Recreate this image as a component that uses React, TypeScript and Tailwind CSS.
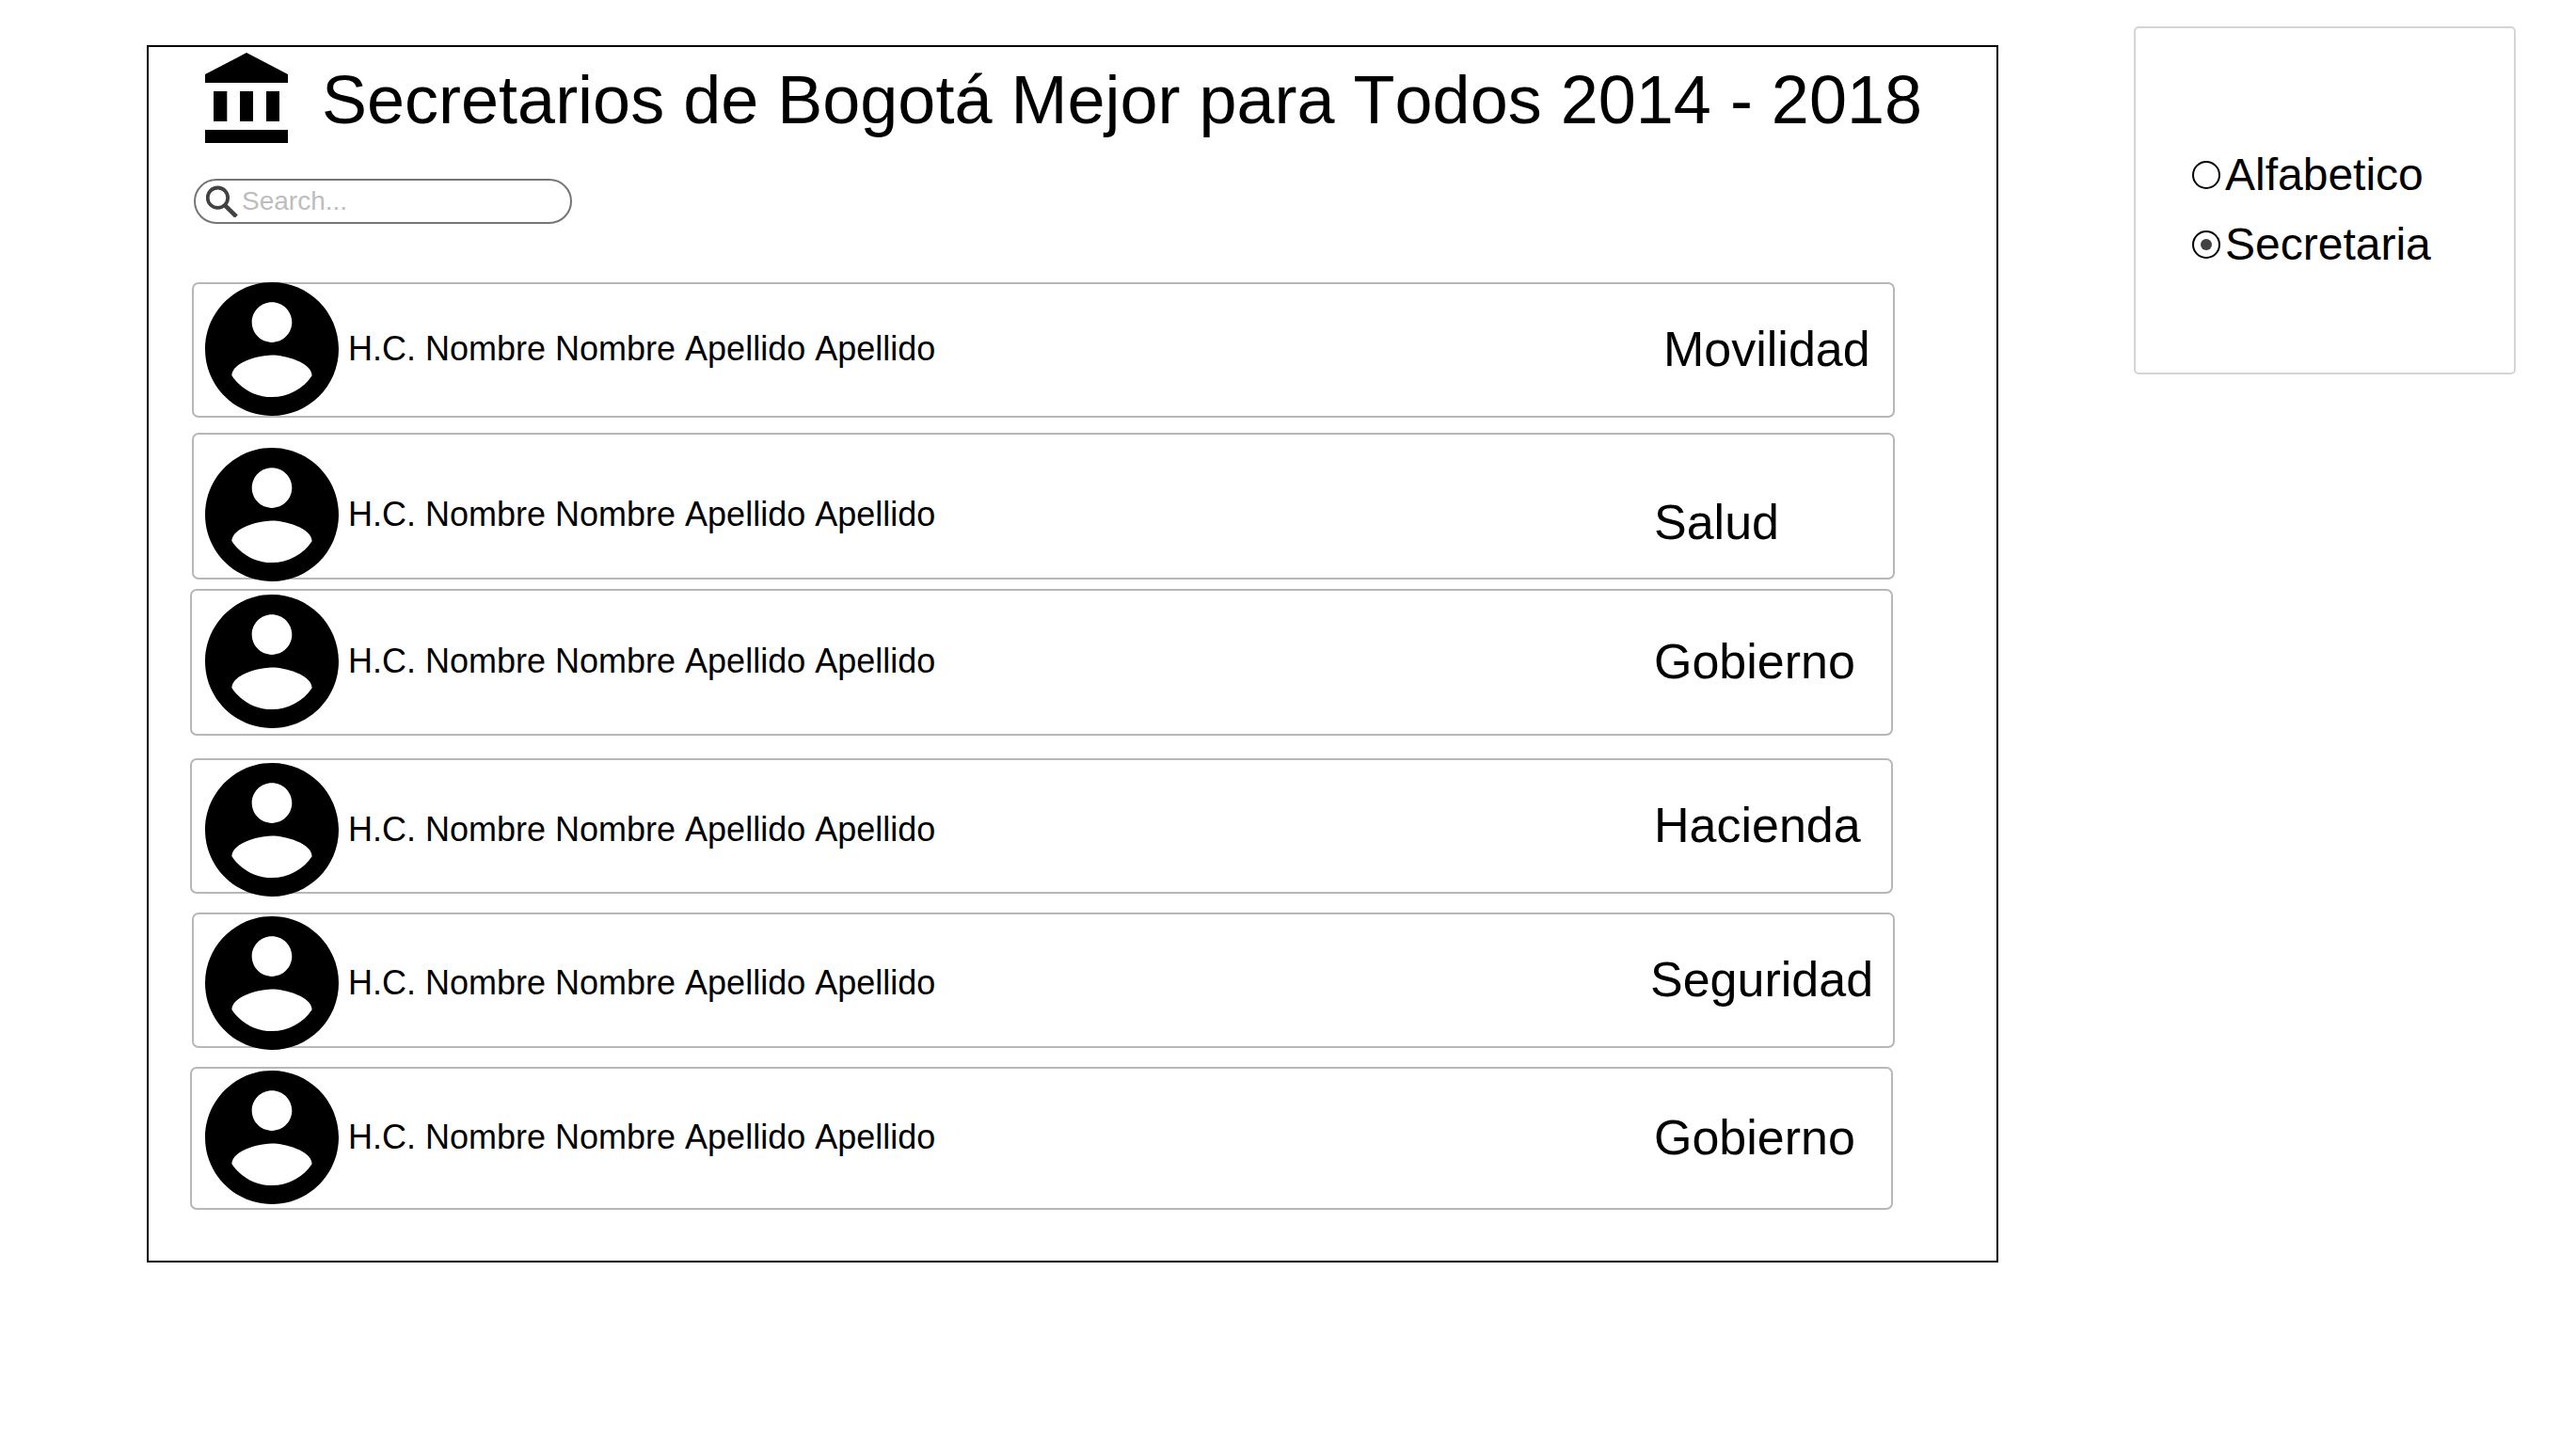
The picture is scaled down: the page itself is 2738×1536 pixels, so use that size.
import { useState } from "react";

type Row = {
  department: string;
  card: string;
  person: string;
  label: string;
};

// Cards alternate between two left edges while their avatars stay in one column.
const rows: Row[] = [
  { department: "Movilidad", card: "ml-0.5 pl-3 min-h-[144px]", person: "pb-0.5", label: "w-[244px]" },
  { department: "Salud", card: "mt-4 ml-0.5 pl-3 min-h-[156px]", person: "pt-[18px]", label: "w-[254px] pt-9" },
  { department: "Gobierno", card: "mt-2.5 mr-0.5 pl-3.5 min-h-[156px]", person: "pb-0.5", label: "w-[252px]" },
  { department: "Hacienda", card: "mt-6 mr-0.5 pl-3.5 min-h-[144px]", person: "pt-2", label: "w-[252px]" },
  { department: "Seguridad", card: "mt-5 ml-0.5 pl-3 min-h-[144px]", person: "pt-1.5", label: "w-[258px]" },
  { department: "Gobierno", card: "mt-5 mr-0.5 pl-3.5 min-h-[152px]", person: "pb-0.5", label: "w-[252px]" },
];

function BankIcon() {
  return (
    <svg viewBox="0 0 88 96" className="h-24 w-[88px] shrink-0" fill="currentColor" aria-hidden="true">
      <path d="M44 0 88 23V32H0V23ZM9 41H23.3V73H9ZM37 41H51V73H37ZM65 41H79V73H65ZM0 82H88V96H0Z" />
    </svg>
  );
}

function AvatarIcon() {
  return (
    <svg viewBox="2 2 20 20" className="-my-2 size-[142px] shrink-0" fill="currentColor" aria-hidden="true">
      <path d="M12 2C6.48 2 2 6.48 2 12s4.48 10 10 10 10-4.48 10-10S17.52 2 12 2zm0 3c1.66 0 3 1.34 3 3s-1.34 3-3 3-3-1.34-3-3 1.34-3 3-3zm0 14.2c-2.5 0-4.71-1.28-6-3.22.03-1.99 4-3.08 6-3.08 1.99 0 5.97 1.09 6 3.08-1.29 1.94-3.5 3.22-6 3.22z" />
    </svg>
  );
}

function SearchIcon() {
  return (
    <svg viewBox="0 0 34 34" className="size-[34px] shrink-0 text-[#424242]" fill="none" stroke="currentColor" aria-hidden="true">
      <circle cx="12.4" cy="13.2" r="10.7" strokeWidth="3.8" />
      <path d="M20.2 21.4 32.2 33.2" strokeWidth="4.6" />
    </svg>
  );
}

function SecretaryCard({ row }: { row: Row }) {
  return (
    <li className={`flex items-center justify-between rounded-[7px] border-2 border-[#b7b7b7] ${row.card}`}>
      <div className={`flex items-center gap-2.5 ${row.person}`}>
        <AvatarIcon />
        <span className="text-[36px] leading-10 whitespace-nowrap">H.C. Nombre Nombre Apellido Apellido</span>
      </div>
      <span className={`shrink-0 pb-0.5 text-[52px] leading-[60px] ${row.label}`}>{row.department}</span>
    </li>
  );
}

export default function App() {
  const [order, setOrder] = useState("Secretaria");
  const [query, setQuery] = useState("");

  return (
    <div className="flex min-h-screen items-start gap-36 bg-white pt-7 pr-16 pl-[156px] font-['Liberation_Sans',Arial,sans-serif] text-black [font-kerning:none]">
      <main className="mt-5 flex-1 border-2 border-black pt-1.5 pb-[54px]">
        <header className="flex items-center gap-9 pl-[60px]">
          <BankIcon />
          <h1 className="pt-1 text-[72px] leading-[80px] whitespace-nowrap">
            Secretarios de Bogotá Mejor para Todos 2014 - 2018
          </h1>
        </header>

        <label className="mt-[38px] ml-12 flex h-12 w-[402px] items-center gap-1 rounded-full border-2 border-[#757575] pr-5 pl-[11px]">
          <SearchIcon />
          <input
            type="text"
            aria-label="Search"
            placeholder="Search..."
            value={query}
            onChange={(e) => setQuery(e.target.value)}
            className="w-full min-w-0 bg-transparent text-[28px] leading-8 outline-none placeholder:text-[#bdbdbd]"
          />
        </label>

        <ul className="mt-[62px] mr-[108px] ml-11 flex flex-col">
          {rows.map((row, i) => (
            <SecretaryCard key={i} row={row} />
          ))}
        </ul>
      </main>

      <fieldset className="flex w-[406px] shrink-0 flex-col gap-5 rounded-[5px] border-2 border-[#d4d4d4] pt-[129px] pb-[109px] pl-[60px]">
        {["Alfabetico", "Secretaria"].map((option) => (
          <label key={option} className="flex items-center gap-[5px] text-[48px] leading-[54px]">
            <input
              type="radio"
              name="order"
              value={option}
              checked={order === option}
              onChange={() => setOrder(option)}
              className="grid size-[30px] shrink-0 appearance-none place-items-center rounded-full border-2 border-black before:size-3 before:rounded-full checked:before:bg-[#424242]"
            />
            {option}
          </label>
        ))}
      </fieldset>
    </div>
  );
}
